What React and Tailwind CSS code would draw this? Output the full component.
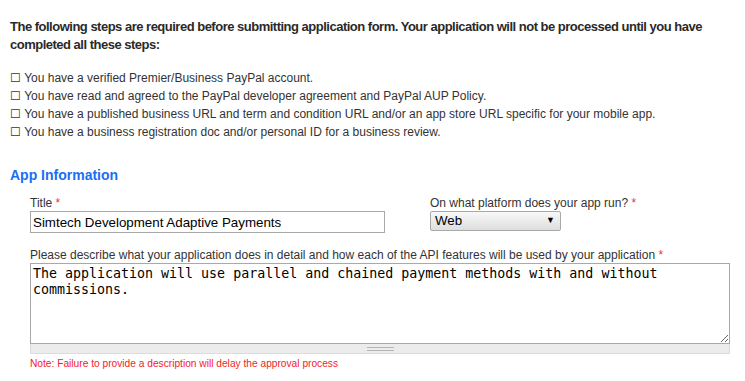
export default function App() {
  const steps = [
    'You have a verified Premier/Business PayPal account.',
    'You have read and agreed to the PayPal developer agreement and PayPal AUP Policy.',
    'You have a published business URL and term and condition URL and/or an app store URL specific for your mobile app.',
    'You have a business registration doc and/or personal ID for a business review.',
  ];

  return (
    <div className="w-[745px] h-[381px] overflow-hidden bg-white text-[#333] font-['Liberation_Sans',Arial,sans-serif]">
      <div className="pl-[10px] pr-[10px] pt-[18px]">
        <p className="w-[715px] font-bold text-[13px] leading-[18px] text-[#2a2a2a] tracking-[-0.5px]">
          The following steps are required before submitting application form. Your application will not be processed until you have completed all these steps:
        </p>

        <ul className="mt-[15px] text-[12px] leading-[18px]">
          {steps.map((s) => (
            <li key={s}>☐ {s}</li>
          ))}
        </ul>

        <h2 className="mt-[24px] text-[14px] leading-[20px] font-bold text-[#1b6ef3]">App Information</h2>

        <div className="pl-[20px] mt-[10px]">
          <div className="flex">
            <div className="w-[400px]">
              <label className="block text-[12px] leading-[16px]">
                Title <span className="text-[#e8383d]">*</span>
              </label>
              <input
                className="block w-[355px] h-[22px] border border-[#a9a9a9] px-[2px] text-[13.33px] text-black outline-none"
                defaultValue="Simtech Development Adaptive Payments"
              />
            </div>
            <div>
              <label className="block text-[12px] leading-[16px]">
                On what platform does your app run? <span className="text-[#e8383d]">*</span>
              </label>
              <div className="w-[131px] h-[20px] border border-[#a9a9a9] rounded-[2px] bg-gradient-to-b from-[#f8f8f8] to-[#dedede] flex items-center justify-between pl-[4px] pr-[5px] text-[13.33px] text-black">
                <span>Web</span>
                <span className="text-[9px]">▼</span>
              </div>
            </div>
          </div>

          <label className="block mt-[15px] text-[12px] leading-[15px]">
            Please describe what your application does in detail and how each of the API features will be used by your application <span className="text-[#e8383d]">*</span>
          </label>
          <div className="w-[700px]">
            <textarea
              className="block w-full h-[81px] border border-[#a9a9a9] px-[2px] pt-[2px] text-[13.3px] leading-[16px] text-black font-['DejaVu_Sans_Mono',monospace] resize-y outline-none"
              defaultValue="The application will use parallel and chained payment methods with and without commissions."
            />
            <div className="h-[10px] bg-[#ececec] border-b border-x border-[#dcdcdc] flex flex-col items-center justify-center gap-[2px]">
              <div className="w-[27px] h-px bg-[#b5b5b5]" />
              <div className="w-[27px] h-px bg-[#b5b5b5]" />
            </div>
          </div>
          <p className="mt-[3px] text-[10.2px] leading-[14px] text-[#f2222a]">
            Note: Failure to provide a description will delay the approval process
          </p>
        </div>
      </div>
    </div>
  );
}
